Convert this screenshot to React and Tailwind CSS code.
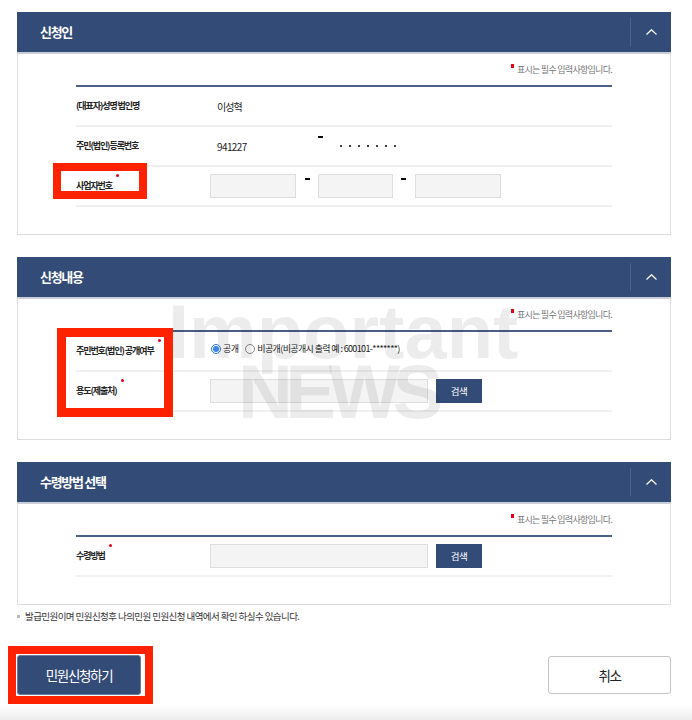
const FONT = { fontFamily: '"Noto Sans CJK KR", "Noto Sans", sans-serif' };

const ReqDot = ({ className = "" }) => (
  <span className={`inline-block h-[3px] w-[3px] shrink-0 rounded-full bg-[#e60012] ${className}`} />
);

const PanelHeader = ({ title }) => (
  <div className="border-b-2 border-[#c9ced8]">
    <div className="flex h-[40px] items-center bg-[#334b77]">
      <div className="flex-1 pl-[23px]">
        <h2 className="text-[13px] font-bold tracking-[-0.1em] text-white">{title}</h2>
      </div>
      <div className="h-[28px] w-px bg-[#4b628d]" />
      <div className="flex w-[40px] items-center justify-center">
        <svg width="11" height="6" viewBox="0 0 11 6" fill="none">
          <polyline points="0.5,5.5 5.5,0.7 10.5,5.5" stroke="white" strokeWidth="1.2" />
        </svg>
      </div>
    </div>
  </div>
);

const RequiredNote = () => (
  <div className="flex h-[12px] items-center justify-end pr-[58px]">
    <ReqDot className="mr-[3px] -mt-[9px] h-[4px] w-[3px] rounded-none" />
    <span className="text-[9px] tracking-[-0.08em] text-[#777]">표시는 필수 입력사항입니다.</span>
  </div>
);

const Row = ({ label, required, children }) => (
  <div className="flex h-[40px] items-center border-b-2 border-[#f0f0f0]">
    <div className="flex w-[134px] items-start">
      <span className="text-[9px] font-bold tracking-[-0.12em] text-[#222]">{label}</span>
      {required && <ReqDot className="ml-[4px] -mt-[5px]" />}
    </div>
    <div className="flex flex-1 items-center">{children}</div>
  </div>
);

const Panel = ({ title, children, overlay, className = "" }) => (
  <section className={className}>
    <PanelHeader title={title} />
    <div className="relative border-x border-b border-[#dcdcdc] bg-white pb-[27px] pt-[10px]">
      <RequiredNote />
      <div className="mx-[58px] mt-[9px] border-t-2 border-[#4a5e88]">{children}</div>
      {overlay}
    </div>
  </section>
);

const Field = ({ w }) => (
  <div className={`h-[24px] shrink-0 ${w} border border-[#dedede] bg-[#f4f4f4]`} />
);

const Dash = ({ className = "" }) => (
  <span className={`mt-[-14px] h-[2px] w-[5px] shrink-0 bg-black ${className}`} />
);

const SearchButton = () => (
  <button className="ml-[8px] flex h-[24px] w-[46px] items-center justify-center bg-[#334b77] text-[9.5px] tracking-[-0.05em] text-white">
    검색
  </button>
);

const Radio = ({ checked, label }) => (
  <label className="flex items-center">
    {checked ? (
      <span className="flex h-[10px] w-[10px] items-center justify-center rounded-full border border-[#2c74d8] bg-white">
        <span className="h-[6px] w-[6px] rounded-full bg-[#3a86e8]" />
      </span>
    ) : (
      <span className="h-[10px] w-[10px] rounded-full border border-[#888] bg-white" />
    )}
    <span className="ml-[2px] text-[9px] tracking-[-0.07em] text-[#222]">{label}</span>
  </label>
);

export default function App() {
  return (
    <div style={FONT} className="relative flex h-[720px] w-full flex-col overflow-hidden bg-white pl-[17px] pr-[21px] pt-[12px]">
      <Panel
        title="신청인"
        overlay={
          <div className="absolute left-[35px] top-[109px] z-20 h-[36px] w-[94px] border-[8px] border-[#ff2200]" />
        }
      >
        <Row label="(대표자)성명 법인명">
          <span className="pl-[7px] text-[10px] tracking-[-0.1em] text-[#222]">이성혁</span>
        </Row>
        <Row label="주민(법인)등록번호">
          <span className="w-[108px] pl-[7px] text-[10px] tracking-[-0.06em] text-[#222]">941227</span>
          <span className="h-[2px] w-[5px] -translate-y-[9px] bg-black" />
          <span className="ml-[17px] flex gap-[7px]">
            {[0, 1, 2, 3, 4, 5, 6].map((i) => (
              <span key={i} className="h-[2px] w-[2px] rounded-full bg-black" />
            ))}
          </span>
        </Row>
        <Row label="사업자번호" required>
          <div className="flex items-center">
            <Field w="w-[86px]" />
            <Dash className="ml-[9px]" />
            <Field w="ml-[8px] w-[75px]" />
            <Dash className="ml-[8px]" />
            <Field w="ml-[9px] w-[86px]" />
          </div>
        </Row>
      </Panel>

      <Panel
        title="신청내용"
        className="mt-[22px]"
        overlay={
          <div className="absolute left-[39px] top-[29px] z-20 h-[89px] w-[116px] border-[9px] border-[#ff2200]" />
        }
      >
        <Row label="주민번호(법인) 공개여부" required>
          <div className="-mt-[5px] flex items-center gap-[7px] pl-[1px]">
            <Radio checked label="공개" />
            <Radio label="비공개(비공개시 출력 예 : 600101-*******)" />
          </div>
        </Row>
        <Row label="용도(제출처)" required>
          <Field w="w-[218px]" />
          <SearchButton />
        </Row>
      </Panel>

      <Panel title="수령방법 선택" className="mt-[22px]">
        <Row label="수령방법" required>
          <Field w="w-[218px]" />
          <SearchButton />
        </Row>
      </Panel>

      <p className="mt-[5px] flex h-[12px] items-center whitespace-nowrap text-[9.5px] tracking-[-0.06em] text-[#333]">
        <span className="mr-[5px] h-[3px] w-[3px] bg-[#bbb]" />
        발급민원이며 민원신청후 나의민원 민원신청 내역에서 확인 하실수 있습니다.
      </p>

      <div className="mt-[24px] flex items-start justify-between">
        <div className="-ml-[9px] border-[8px] border-[#ff2200] bg-white p-[1px] pr-[4px]">
          <button className="flex h-[40px] w-[124px] items-center justify-center rounded-[3px] border border-[#6a7b9b] bg-[#334b77] text-[13.5px] tracking-[-0.1em] text-white">
            민원신청하기
          </button>
        </div>
        <button className="mt-[10px] flex h-[38px] w-[123px] items-center justify-center rounded-[3px] border border-[#c4c4c4] bg-white text-[13.5px] tracking-[-0.1em] text-[#222]">
          취소
        </button>
      </div>

      <div className="-ml-[17px] -mr-[21px] mt-[1px] flex-1 bg-gradient-to-b from-white to-[#ececec]" />

      <div
        className="pointer-events-none absolute left-[168px] top-[302px] z-10 text-[76px] font-bold leading-[60px] text-[rgba(0,0,0,0.075)]"
        style={{ fontFamily: '"Liberation Sans", Arial, sans-serif' }}
      >
        Important
      </div>
      <div
        className="pointer-events-none absolute left-[238px] top-[362px] z-10 text-[76px] font-bold leading-[60px] tracking-[-0.1em] text-[rgba(0,0,0,0.075)]"
        style={{ fontFamily: '"Liberation Sans", Arial, sans-serif' }}
      >
        NEWS
      </div>
    </div>
  );
}
